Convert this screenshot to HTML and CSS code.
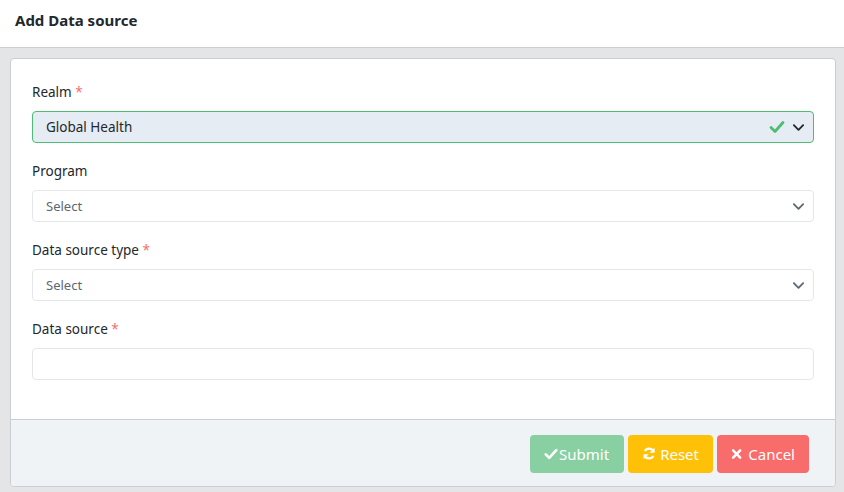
FILE: index.html
```html
<!DOCTYPE html>
<html>
<head>
<meta charset="utf-8">
<link rel="stylesheet" href="styles.css">
</head>
<body>
<header class="topbar"><h1 class="title">Add Data source</h1></header>
<main class="page">
  <section class="card">
    <div class="card-body">
      <div class="field">
        <label class="label">Realm <span class="req">*</span></label>
        <div class="control valid">
          <span class="value">Global Health</span>
          <span class="icons">
            <svg class="ok" viewBox="0 0 16 16" width="16" height="16"><path d="M2 8.5 L6 12.5 L14 3.5" fill="none" stroke="#4dbd74" stroke-width="2.8" stroke-linecap="round" stroke-linejoin="round"/></svg>
            <svg class="chev dark" viewBox="0 0 14 14" width="13" height="13"><path d="M2 4.5 L7 9.5 L12 4.5" fill="none" stroke="#23282c" stroke-width="2" stroke-linecap="round" stroke-linejoin="round"/></svg>
          </span>
        </div>
      </div>
      <div class="field">
        <label class="label">Program</label>
        <div class="control">
          <span class="value muted">Select</span>
          <span class="icons">
            <svg class="chev" viewBox="0 0 14 14" width="13" height="13"><path d="M2 4.5 L7 9.5 L12 4.5" fill="none" stroke="#5c6873" stroke-width="2" stroke-linecap="round" stroke-linejoin="round"/></svg>
          </span>
        </div>
      </div>
      <div class="field">
        <label class="label">Data source type <span class="req">*</span></label>
        <div class="control">
          <span class="value muted">Select</span>
          <span class="icons">
            <svg class="chev" viewBox="0 0 14 14" width="13" height="13"><path d="M2 4.5 L7 9.5 L12 4.5" fill="none" stroke="#5c6873" stroke-width="2" stroke-linecap="round" stroke-linejoin="round"/></svg>
          </span>
        </div>
      </div>
      <div class="field">
        <label class="label">Data source <span class="req">*</span></label>
        <div class="control"></div>
      </div>
    </div>
    <div class="card-footer">
      <button class="btn btn-submit"><svg viewBox="0 0 16 16" width="14" height="14"><path d="M2 8.5 L6 12.5 L14 3.5" fill="none" stroke="#fff" stroke-width="3" stroke-linecap="round" stroke-linejoin="round"/></svg>Submit</button>
      <button class="btn btn-reset"><svg viewBox="0 0 16 16" width="15" height="15"><path d="M13.2 6.2 A5.5 5.5 0 0 0 3.2 5.2" fill="none" stroke="#fff" stroke-width="2.6"/><path d="M14.2 1.5 L14.2 7.2 L8.5 7.2 Z" fill="#fff"/><path d="M2.8 9.8 A5.5 5.5 0 0 0 12.8 10.8" fill="none" stroke="#fff" stroke-width="2.6"/><path d="M1.8 14.5 L1.8 8.8 L7.5 8.8 Z" fill="#fff"/></svg>Reset</button>
      <button class="btn btn-cancel"><svg viewBox="0 0 16 16" width="12" height="12"><path d="M3 3 L13 13 M13 3 L3 13" fill="none" stroke="#fff" stroke-width="3.6" stroke-linecap="round"/></svg>Cancel</button>
    </div>
  </section>
</main>
</body>
</html>
```
FILE: styles.css
```css
* { box-sizing: border-box; }
html, body { margin: 0; padding: 0; }
body {
  width: 844px;
  height: 492px;
  overflow: hidden;
  background: #e4e5e6;
  font-family: "Segoe UI", "Noto Sans", "Open Sans", sans-serif;
  color: #23282c;
  font-size: 14px;
}
.topbar {
  height: 48px;
  background: #fff;
  border-bottom: 1px solid #c8ced3;
  display: flex;
  align-items: center;
  padding-left: 15px;
}
.title {
  margin: 0;
  font-size: 15px;
  font-weight: 700;
  color: #23282c;
  position: relative;
  top: -4px;
}
.page { padding: 10px 8px 0 10px; }
.card {
  background: #fff;
  border: 1px solid #c8ced3;
  border-radius: 4px;
  overflow: hidden;
  height: 429px;
  display: flex;
  flex-direction: column;
}
.card-body {
  flex: 1;
  padding: 23px 21px 0 21px;
}
.field { margin-bottom: 18px; }
.label {
  display: block;
  font-size: 13.5px;
  line-height: 20px;
  color: #23282c;
  margin-bottom: 9px;
}
.req { color: #f86c6b; }
.control {
  height: 32px;
  border: 1px solid #e4e7ea;
  border-radius: 4px;
  display: flex;
  align-items: center;
  padding: 0 8px 0 13px;
  background: #fff;
}
.control.valid {
  background: #e5ecf3;
  border-color: #4dbd74;
}
.value { flex: 1; font-size: 13.5px; color: #23282c; }
.value.muted { color: #5c6873; font-size: 13px; }
.icons { display: flex; align-items: center; gap: 7px; }
.chev { display: block; }
.ok { display: block; }
.card-footer {
  height: 67px;
  background: #f0f3f5;
  border-top: 1px solid #c8ced3;
  display: flex;
  justify-content: flex-end;
  align-items: center;
  gap: 4px;
  padding-right: 26px;
  padding-top: 1px;
}
.btn {
  height: 38px;
  border: none;
  border-radius: 4px;
  color: #fff;
  font-family: inherit;
  font-size: 15px;
  display: flex;
  align-items: center;
  gap: 4px;
  padding: 0 14px;
}
.btn-submit { background: #88d0a2; width: 94px; gap: 1px; }
.btn-reset { background: #ffc107; width: 85px; }
.btn-cancel { background: #f86c6b; width: 92px; gap: 6px; }
```
